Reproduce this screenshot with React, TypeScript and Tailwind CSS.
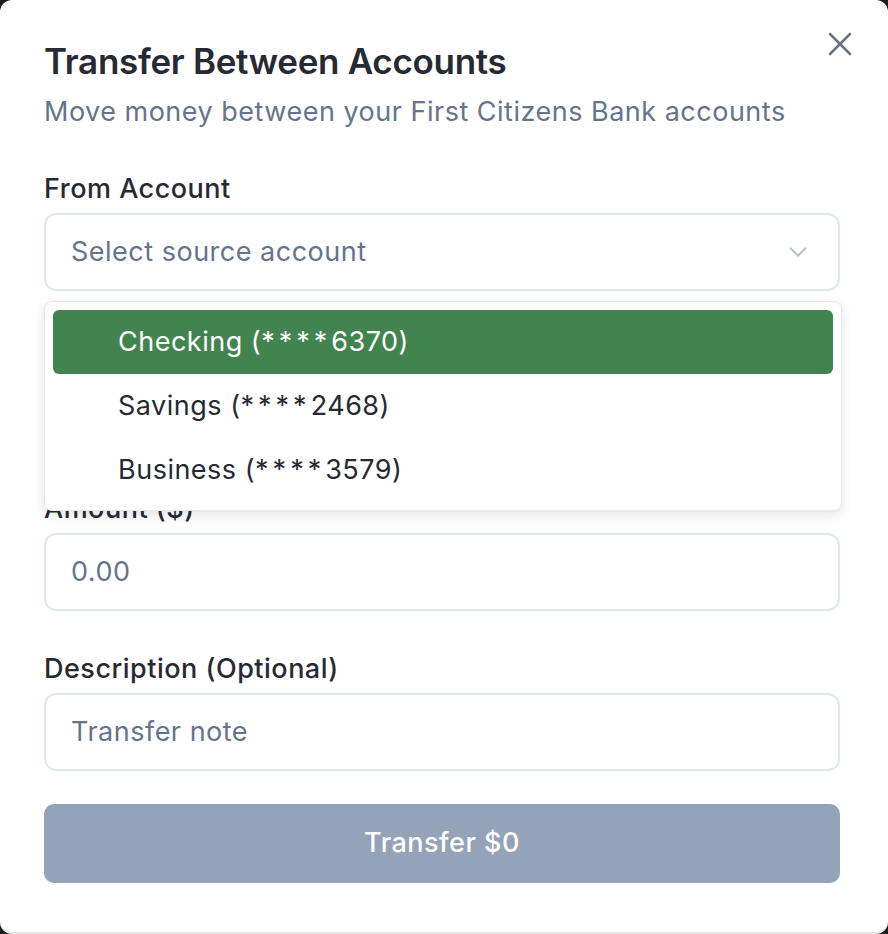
import { X, ChevronDown } from 'lucide-react'

const ACCOUNTS = [
  { name: 'Checking', last4: '6370', active: true },
  { name: 'Savings', last4: '2468', active: false },
  { name: 'Business', last4: '3579', active: false },
]

function Label({ children }: { children: React.ReactNode }) {
  return <p className="text-[27px] leading-[30px] tracking-[0.5px] font-medium text-[#262a33]">{children}</p>
}

function Field({ label, placeholder, select = false }: { label: string; placeholder: string; select?: boolean }) {
  return (
    <div className="flex flex-col gap-[9px]">
      <Label>{label}</Label>
      <div className="h-[78px] rounded-[12px] border-2 border-[#e2e8f0] bg-white px-[25px] flex items-center justify-between">
        <span className="text-[27px] tracking-[0.5px] text-[#64748b]">{placeholder}</span>
        {select && <ChevronDown size={30} strokeWidth={1.5} className="text-[#9ca3af] opacity-70" />}
      </div>
    </div>
  )
}

export default function App() {
  return (
    <div className="min-h-screen bg-[#1c1c1c]" style={{ fontFamily: 'Inter, "Noto Sans", sans-serif' }}>
      <div className="relative bg-white rounded-[12px] border-b-2 border-[#e2e8f0] pl-[44px] pr-[48px] pt-[40px] pb-[49px]">
        <button className="absolute right-[28px] top-[24px] text-[#6b7280]">
          <X size={40} strokeWidth={1.5} />
        </button>

        <h2 className="text-[35px] leading-[42px] tracking-[-0.3px] font-semibold text-[#262a33]">
          Transfer Between Accounts
        </h2>
        <p className="mt-[12px] text-[27px] leading-[36px] tracking-[0.5px] text-[#64748b]">
          Move money between your First Citizens Bank accounts
        </p>

        <div className="mt-[44px] flex flex-col gap-[43px]">
          <div className="relative">
            <Field label="From Account" placeholder="Select source account" select />
            {/* open dropdown */}
            <div className="absolute left-0 right-[-2px] top-[127px] z-10 rounded-[8px] border border-[#e2e8f0] bg-white p-[8px] shadow-[0_4px_12px_rgba(15,23,42,0.12)]">
              {ACCOUNTS.map(a => (
                <div
                  key={a.name}
                  className={`h-[64px] rounded-[6px] pl-[65px] flex items-center text-[27px] tracking-[0.5px] ${
                    a.active ? 'bg-[#42844f] text-white' : 'text-[#262a33]'
                  }`}
                >
                  {a.name} (<span className="tracking-[4px]">****</span>{a.last4})
                </div>
              ))}
            </div>
          </div>
          <Field label="To Account" placeholder="Select destination account" select />
          <Field label="Amount ($)" placeholder="0.00" />
          <Field label="Description (Optional)" placeholder="Transfer note" />
        </div>

        <button className="mt-[33px] w-full h-[79px] rounded-[10px] bg-[#94a3b8] text-white text-[27px] tracking-[0.5px] font-medium">
          Transfer $0
        </button>
      </div>
    </div>
  )
}
